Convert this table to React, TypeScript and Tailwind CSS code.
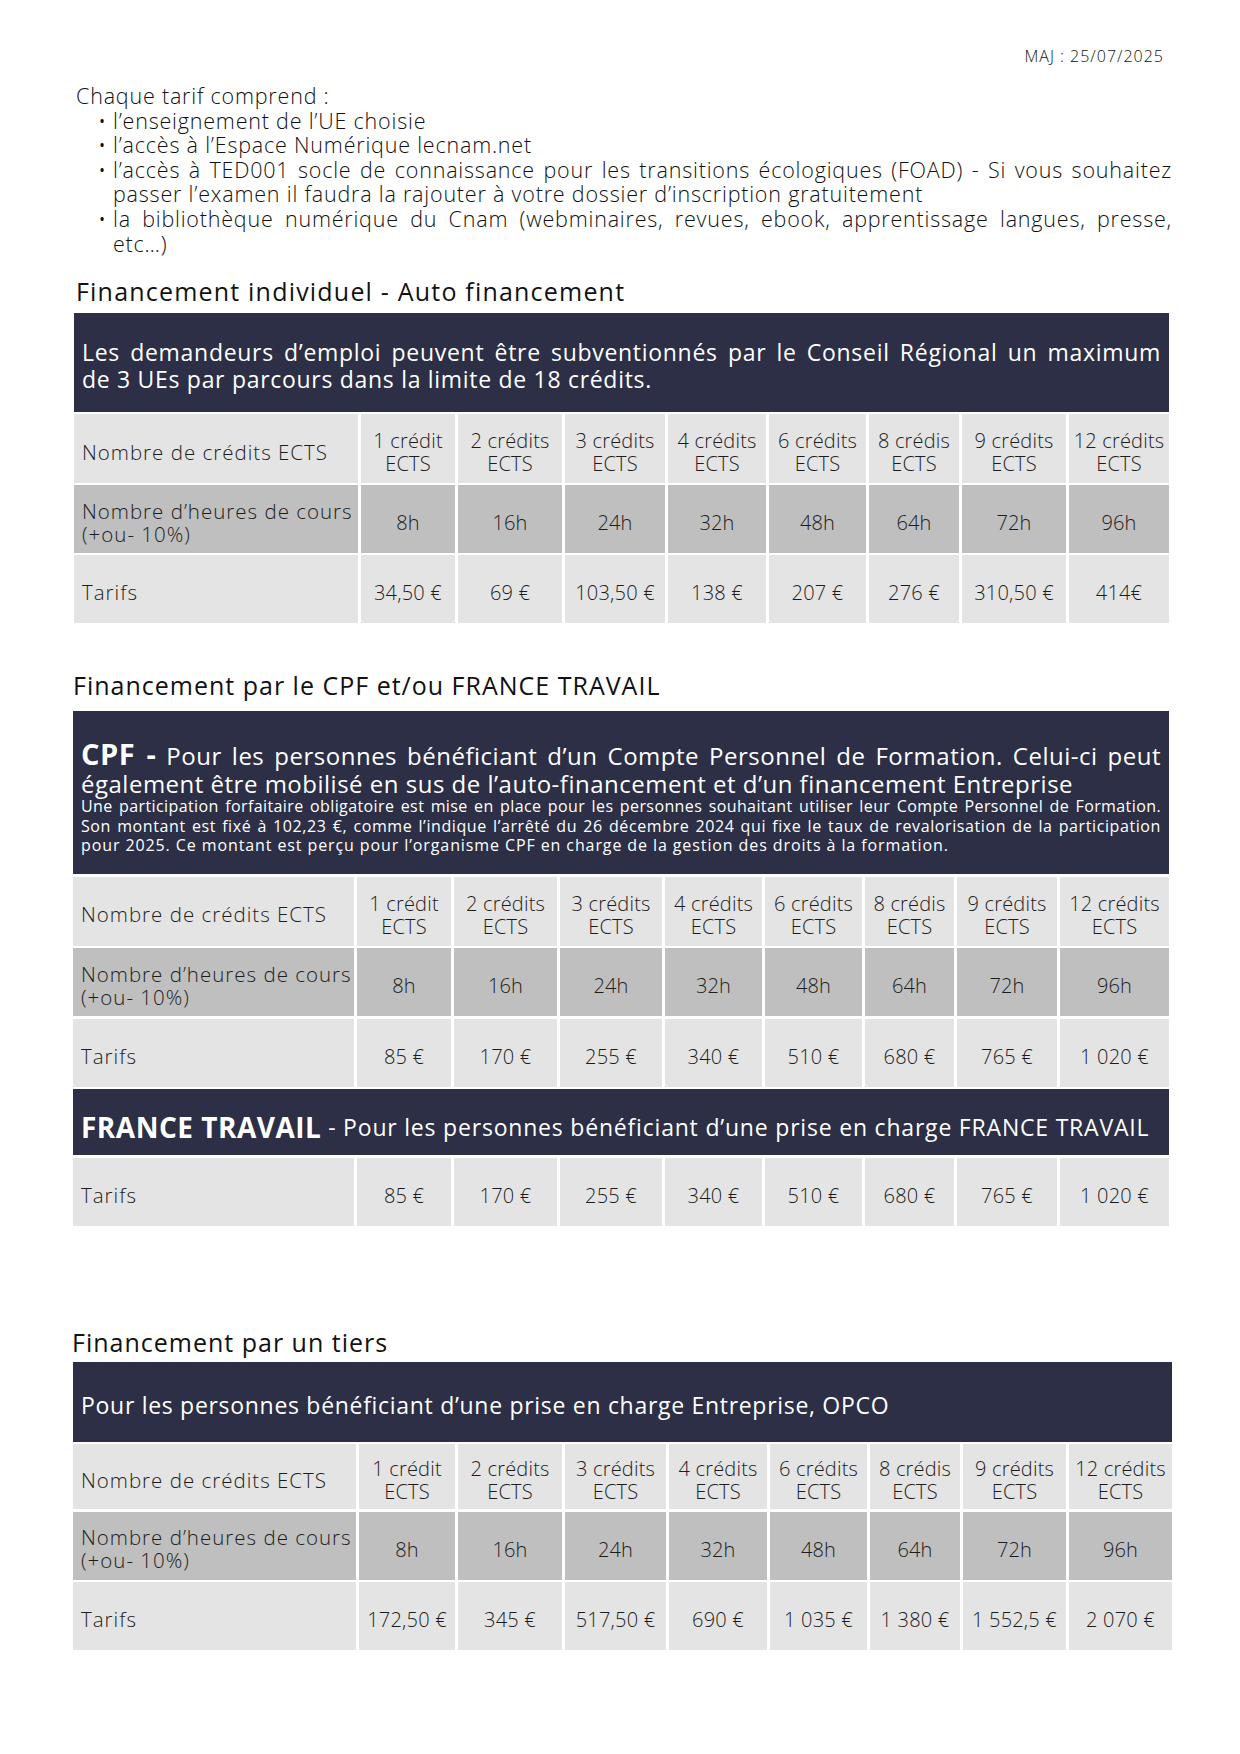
import React from 'react'

const credits = [
  ['1 crédit', 'ECTS'],
  ['2 crédits', 'ECTS'],
  ['3 crédits', 'ECTS'],
  ['4 crédits', 'ECTS'],
  ['6 crédits', 'ECTS'],
  ['8 crédis', 'ECTS'],
  ['9 crédits', 'ECTS'],
  ['12 crédits', 'ECTS'],
]
const hours = ['8h', '16h', '24h', '32h', '48h', '64h', '72h', '96h']

const tarifsIndiv = ['34,50 €', '69 €', '103,50 €', '138 €', '207 €', '276 €', '310,50 €', '414€']
const tarifsCpf = ['85 €', '170 €', '255 €', '340 €', '510 €', '680 €', '765 €', '1 020 €']
const tarifsTiers = ['172,50 €', '345 €', '517,50 €', '690 €', '1 035 €', '1 380 €', '1 552,5 €', '2 070 €']

// one justified line, broken by hand like the source PDF
function JLine({ children, className = '' }: { children: React.ReactNode; className?: string }) {
  return <div className={`whitespace-nowrap text-justify [text-align-last:justify] ${className}`}>{children}</div>
}

function Cell({ children, mid, label }: { children: React.ReactNode; mid?: boolean; label?: boolean }) {
  return (
    <div
      className={`flex items-center pt-[7px] leading-[23px] font-light text-[#1c1c1c] whitespace-nowrap ${
        mid ? 'bg-[#bfbfbf]' : 'bg-[#e4e4e4]'
      } ${label ? 'pl-[8px] justify-start text-[20.5px] tracking-[1px]' : 'justify-center text-center text-[20px] tracking-[0.2px]'}`}
    >
      {children}
    </div>
  )
}

function CreditsRow() {
  return (
    <>
      <Cell label>Nombre de crédits ECTS</Cell>
      {credits.map(c => (
        <Cell key={c[0]}>
          <div>
            <div>{c[0]}</div>
            <div>{c[1]}</div>
          </div>
        </Cell>
      ))}
    </>
  )
}

function HoursRow() {
  return (
    <>
      <Cell label mid>
        <div>
          <div>Nombre d’heures de cours</div>
          <div>(+ou- 10%)</div>
        </div>
      </Cell>
      {hours.map(h => (
        <Cell key={h} mid>
          {h}
        </Cell>
      ))}
    </>
  )
}

function TarifsRow({ values }: { values: string[] }) {
  return (
    <>
      <Cell label>Tarifs</Cell>
      {values.map((v, i) => (
        <Cell key={i}>{v}</Cell>
      ))}
    </>
  )
}

export default function App() {
  return (
    <div className="w-[1240px] min-h-[1754px] bg-white pt-[45px] pb-[80px] text-[#111] font-['Open_Sans',_'Liberation_Sans',_sans-serif]">
      <div className="pr-[76px] text-right text-[16px] leading-[22px] tracking-[1px] font-light">MAJ : 25/07/2025</div>

      <div className="mt-[17px] pl-[76px] pr-[68px] text-[21.5px] leading-[24.6px] tracking-[0.8px] font-light">
        <div>Chaque tarif comprend :</div>
        <ul className="pl-[22px]">
          <li className="flex">
            <span className="w-[15px] shrink-0">•</span>
            <span>l’enseignement de l’UE choisie</span>
          </li>
          <li className="flex">
            <span className="w-[15px] shrink-0">•</span>
            <span>l’accès à l’Espace Numérique lecnam.net</span>
          </li>
          <li className="flex">
            <span className="w-[15px] shrink-0">•</span>
            <div className="flex-1">
              <JLine>l’accès à TED001 socle de connaissance pour les transitions écologiques (FOAD) - Si vous souhaitez</JLine>
              <div>passer l’examen il faudra la rajouter à votre dossier d’inscription gratuitement</div>
            </div>
          </li>
          <li className="flex">
            <span className="w-[15px] shrink-0">•</span>
            <div className="flex-1">
              <JLine>la bibliothèque numérique du Cnam (webminaires, revues, ebook, apprentissage langues, presse,</JLine>
              <div>etc…)</div>
            </div>
          </li>
        </ul>
      </div>

      {/* Financement individuel */}
      <h2 className="mt-[20px] pl-[76px] text-[25px] leading-[30px] tracking-[1.2px] font-normal">Financement individuel - Auto financement</h2>
      <div className="mt-[7px] ml-[74px] w-[1095px] grid grid-cols-[284px_94px_104px_100px_98px_97px_90px_104px_100px] grid-rows-[99px_69px_68px_68px] gap-x-[3px] gap-y-[2px]">
        <div className="col-span-full bg-[#2c2f45] px-[8px] pt-[26px] text-white text-[23px] leading-[27px] tracking-[0.7px] font-medium">
          <JLine>Les demandeurs d’emploi peuvent être subventionnés par le Conseil Régional un maximum</JLine>
          <div>de 3 UEs par parcours dans la limite de 18 crédits.</div>
        </div>
        <CreditsRow />
        <HoursRow />
        <TarifsRow values={tarifsIndiv} />
      </div>

      {/* CPF / France Travail */}
      <h2 className="mt-[47px] pl-[73px] text-[25px] leading-[30px] tracking-[1px] font-normal">Financement par le CPF et/ou FRANCE TRAVAIL</h2>
      <div className="mt-[11px] ml-[73px] w-[1096px] grid grid-cols-[281px_94px_103px_102px_97px_97px_89px_100px_109px] grid-rows-[163px_69px_68px_68px_66px_68px] gap-x-[3px] gap-y-[2.5px]">
        <div className="col-span-full bg-[#2c2f45] px-[8px] pt-[29px] text-white">
          <JLine className="text-[24px] leading-[28px] tracking-[0.5px] font-medium">
            <span className="text-[29px] font-bold">CPF -</span> Pour les personnes bénéficiant d’un Compte Personnel de Formation. Celui-ci peut
          </JLine>
          <div className="text-[24px] leading-[27px] tracking-[0.5px] font-medium">également être mobilisé en sus de l’auto-financement et d’un financement Entreprise</div>
          <div className="text-[16px] leading-[19.5px] font-normal">
            <JLine className="tracking-[0.4px]">Une participation forfaitaire obligatoire est mise en place pour les personnes souhaitant utiliser leur Compte Personnel de Formation.</JLine>
            <JLine className="tracking-[0.6px]">Son montant est fixé à 102,23 €, comme l’indique l’arrêté du 26 décembre 2024 qui fixe le taux de revalorisation de la participation</JLine>
            <div className="tracking-[0.9px]">pour 2025. Ce montant est perçu pour l’organisme CPF en charge de la gestion des droits à la formation.</div>
          </div>
        </div>
        <CreditsRow />
        <HoursRow />
        <TarifsRow values={tarifsCpf} />
        <div className="col-span-full bg-[#2c2f45] px-[8px] pt-[10px] flex items-center text-white whitespace-nowrap">
          <span className="text-[28px] tracking-[0.5px] font-bold">FRANCE TRAVAIL</span>
          <span className="text-[23px] tracking-[0.8px] font-medium">&nbsp;- Pour les personnes bénéficiant d’une prise en charge FRANCE TRAVAIL</span>
        </div>
        <TarifsRow values={tarifsCpf} />
      </div>

      {/* Tiers */}
      <h2 className="mt-[101px] pl-[72px] text-[25px] leading-[30px] tracking-[1px] font-normal">Financement par un tiers</h2>
      <div className="mt-[5px] ml-[73px] w-[1099px] grid grid-cols-[283px_96px_104px_101px_98px_97px_90px_103px_103px] grid-rows-[80px_65px_68px_68px] gap-x-[3px] gap-y-[2.5px]">
        <div className="col-span-full bg-[#2c2f45] px-[8px] pt-[8px] flex items-center text-white text-[23px] leading-[27px] tracking-[0.7px] font-medium">
          Pour les personnes bénéficiant d’une prise en charge Entreprise, OPCO
        </div>
        <CreditsRow />
        <HoursRow />
        <TarifsRow values={tarifsTiers} />
      </div>
    </div>
  )
}
